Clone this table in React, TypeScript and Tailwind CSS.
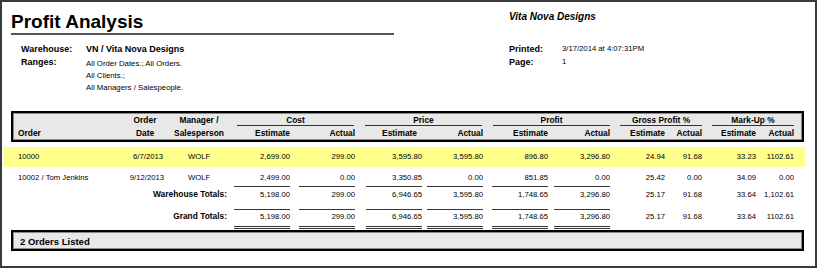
const cols =
  'grid grid-cols-[112px_40px_68px_57px_65px_67px_61px_65px_62px_55px_37px_54px_38px]';

const rows = [
  {
    order: '10000',
    date: '6/7/2013',
    mgr: 'WOLF',
    vals: ['2,699.00', '299.00', '3,595.80', '3,595.80', '896.80', '3,296.80', '24.94', '91.68', '33.23', '1102.61'],
    hi: true,
  },
  {
    order: '10002 / Tom Jenkins',
    date: '9/12/2013',
    mgr: 'WOLF',
    vals: ['2,499.00', '0.00', '3,350.85', '0.00', '851.85', '0.00', '25.42', '0.00', '34.09', '0.00'],
    hi: false,
  },
];

const warehouseTotals = ['5,198.00', '299.00', '6,946.65', '3,595.80', '1,748.65', '3,296.80', '25.17', '91.68', '33.64', '1,102.61'];
const grandTotals = ['5,198.00', '299.00', '6,946.65', '3,595.80', '1,748.65', '3,296.80', '25.17', '91.68', '33.64', '1102.61'];

function Values({ vals }: { vals: string[] }) {
  return (
    <>
      {vals.map((v, i) => (
        <div key={i} className="text-right">
          {v}
        </div>
      ))}
    </>
  );
}

function Rules({ double }: { double?: boolean }) {
  return (
    <div className={`${cols} ml-[2px]`}>
      <div />
      <div />
      <div />
      {[0, 1, 2, 3, 4, 5].map((i) => (
        <div key={i} className="flex justify-end">
          {double ? (
            <div className="h-[3px] w-[56px] border-y border-[#333]" />
          ) : (
            <div className="h-px w-[56px] bg-[#333]" />
          )}
        </div>
      ))}
    </div>
  );
}

function TotalsRow({ label, vals, className }: { label: string; vals: string[]; className: string }) {
  return (
    <div className={`${cols} ml-[2px] leading-[11px] text-[7.7px] ${className}`}>
      <div className="col-span-3 pr-[6px] text-right text-[8.4px] font-bold">{label}</div>
      <Values vals={vals} />
    </div>
  );
}

export default function App() {
  return (
    <div
      className="h-[268px] w-[817px] border-2 border-[#3a3a3a] bg-white pl-[9px] pt-[9px] text-black"
      style={{ fontFamily: '"Liberation Sans", Arial, sans-serif' }}
    >
      <div className="flex items-start">
        <div className="w-[383px]">
          <h1 className="border-b-2 border-[#555] text-[19px] font-bold leading-[22px]">Profit Analysis</h1>
          <div className="mt-[8px] flex pl-[10px] text-[9px] font-bold leading-[12px]">
            <div className="w-[65px]">Warehouse:</div>
            <div>VN / Vita Nova Designs</div>
          </div>
          <div className="mt-[1px] flex pl-[10px]">
            <div className="w-[65px] text-[9px] font-bold leading-[12px]">Ranges:</div>
            <div className="mt-[2px] text-[7.8px] leading-[12px]">
              <div>All Order Dates.; All Orders.</div>
              <div>All Clients.;</div>
              <div>All Managers / Salespeople.</div>
            </div>
          </div>
        </div>
        <div className="ml-[115px]">
          <div className="text-[10px] font-bold italic leading-[12px]">Vita Nova Designs</div>
          <div className="mt-[20px] flex leading-[12px]">
            <div className="w-[53px] text-[9px] font-bold">Printed:</div>
            <div className="text-[7.7px]">3/17/2014 at 4:07:31PM</div>
          </div>
          <div className="mt-[1px] flex leading-[12px]">
            <div className="w-[53px] text-[9px] font-bold">Page:</div>
            <div className="text-[7.7px]">1</div>
          </div>
        </div>
      </div>

      <div className="mt-[17px] h-[31px] w-[793px] border-2 border-black bg-[#e8e8e8] text-[8.4px] font-bold shadow-[inset_0_0_0_1px_#8a8a8a]">
        <div className={`${cols} pt-[2px] leading-[10px]`}>
          <div />
          <div className="text-center">Order</div>
          <div className="text-center">Manager /</div>
          <div className="col-span-2 ml-[4px] mr-[1px] border-b border-[#333] text-center">Cost</div>
          <div className="col-span-2 ml-[10px] mr-[1px] border-b border-[#333] text-center">Price</div>
          <div className="col-span-2 ml-[10px] border-b border-[#333] text-center">Profit</div>
          <div className="col-span-2 ml-[10px] border-b border-[#333] text-center">Gross Profit %</div>
          <div className="col-span-2 ml-[10px] border-b border-[#333] text-center">Mark-Up %</div>
        </div>
        <div className={`${cols} mt-[2px] leading-[11px]`}>
          <div className="pl-[5px]">Order</div>
          <div className="text-center">Date</div>
          <div className="text-center">Salesperson</div>
          <div className="text-right">Estimate</div>
          <div className="text-right">Actual</div>
          <div className="pr-[5px] text-right">Estimate</div>
          <div className="text-right">Actual</div>
          <div className="text-right">Estimate</div>
          <div className="text-right">Actual</div>
          <div className="text-right">Estimate</div>
          <div className="text-right">Actual</div>
          <div className="text-right">Estimate</div>
          <div className="text-right">Actual</div>
        </div>
      </div>

      {rows.map((r) =>
        r.hi ? (
          <div key={r.order} className="mt-[5px] -ml-[7px] w-[801px] bg-[#ffff8c] pl-[9px]">
            <div className={`${cols} h-[20px] text-[7.7px] leading-[20px]`}>
              <div className="pl-[5px]">{r.order}</div>
              <div className="pr-[2px] text-right">{r.date}</div>
              <div className="text-center">{r.mgr}</div>
              <Values vals={r.vals} />
            </div>
          </div>
        ) : (
          <div key={r.order} className={`${cols} ml-[2px] h-[19px] pt-[5px] text-[7.7px] leading-[11px]`}>
            <div className="pl-[5px]">{r.order}</div>
            <div className="pr-[1px] text-right">{r.date}</div>
            <div className="text-center">{r.mgr}</div>
            <Values vals={r.vals} />
          </div>
        ),
      )}

      <Rules />
      <TotalsRow label="Warehouse Totals:" vals={warehouseTotals} className="mt-[2px]" />
      <div className="mt-[9px]">
        <Rules />
      </div>
      <TotalsRow label="Grand Totals:" vals={grandTotals} className="mt-[1px]" />
      <div className="mt-[4px]">
        <Rules double />
      </div>

      <div className="mt-[1px] h-[21px] w-[793px] border-2 border-black bg-[#e8e8e8] pl-[7px] pt-[3px] text-[9.5px] font-bold leading-[14px] shadow-[inset_0_0_0_1px_#8a8a8a]">
        2 Orders Listed
      </div>
    </div>
  );
}
